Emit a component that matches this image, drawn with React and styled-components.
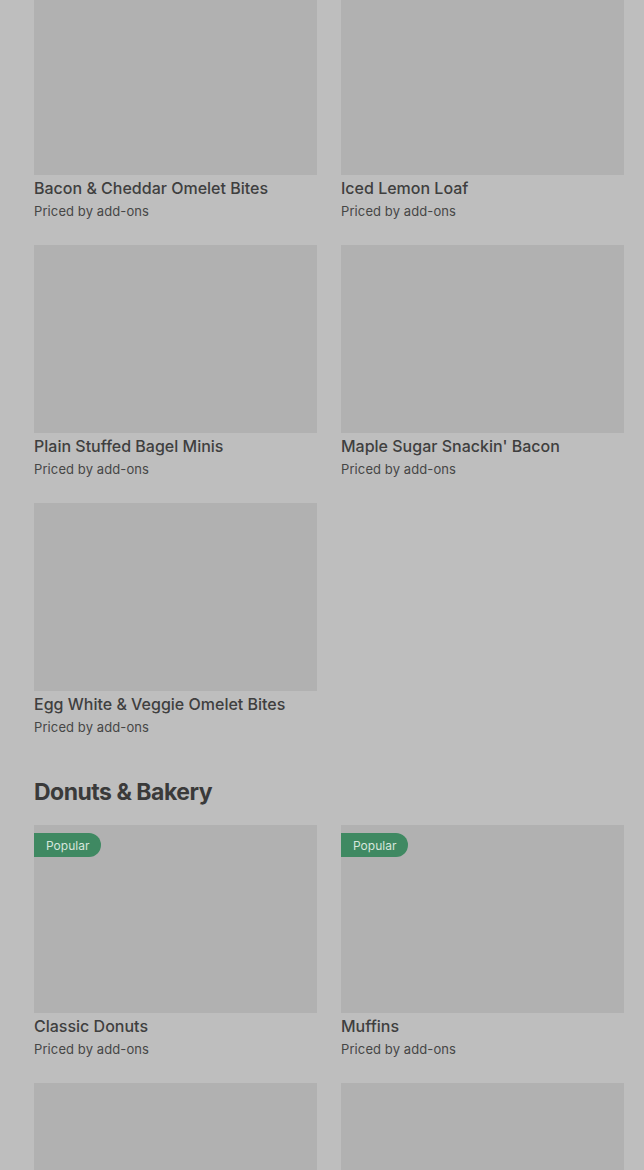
import React from 'react';
import styled, { createGlobalStyle } from 'styled-components';

const GlobalStyle = createGlobalStyle`
  html, body {
    margin: 0;
    padding: 0;
    background: #bebebe;
    font-family: Inter, "Noto Sans", Roboto, sans-serif;
    overflow: hidden;
  }
`;

const Page = styled.div`
  width: 644px;
  height: 1170px;
  overflow: hidden;
  background: #bebebe;
  box-sizing: border-box;
  padding: 0 20px 0 34px;
`;

const Scroller = styled.div`
  margin-top: -13px;
`;

const Grid = styled.div`
  display: grid;
  grid-template-columns: 283px 283px;
  column-gap: 24px;
  row-gap: 24px;
`;

const Card = styled.div`
  display: flex;
  flex-direction: column;
`;

const Thumb = styled.div`
  position: relative;
  height: 188px;
  background: #b1b1b1;
`;

const Badge = styled.span`
  position: absolute;
  top: 8px;
  left: 0;
  height: 24px;
  padding: 0 12px;
  display: flex;
  align-items: center;
  background: #3f8962;
  color: #d6e6dc;
  font-size: 12px;
  border-radius: 0 12px 12px 0;
`;

const Name = styled.div`
  margin-top: 2px;
  font-size: 16px;
  line-height: 22px;
  font-weight: 500;
  color: #3f3f3f;
`;

const Price = styled.div`
  margin-top: 2px;
  font-size: 13px;
  letter-spacing: 0.1px;
  line-height: 20px;
  color: #464646;
`;

const SectionTitle = styled.h2`
  margin: 39px 0 17px;
  font-size: 23px;
  line-height: 32px;
  font-weight: 700;
  letter-spacing: -0.5px;
  color: #3a3a3a;
`;

const breakfast = [
  'Bacon & Cheddar Omelet Bites',
  'Iced Lemon Loaf',
  'Plain Stuffed Bagel Minis',
  "Maple Sugar Snackin' Bacon",
  'Egg White & Veggie Omelet Bites',
];

const bakery = [
  { name: 'Classic Donuts', popular: true },
  { name: 'Muffins', popular: true },
  { name: '' },
  { name: '' },
];

const Item = ({ name, popular }) => (
  <Card>
    <Thumb>{popular && <Badge>Popular</Badge>}</Thumb>
    {name && <Name>{name}</Name>}
    {name && <Price>Priced by add-ons</Price>}
  </Card>
);

export default function App() {
  return (
    <Page>
      <GlobalStyle />
      <Scroller>
        <Grid>
          {breakfast.map(n => <Item key={n} name={n} />)}
        </Grid>
        <SectionTitle>Donuts &amp; Bakery</SectionTitle>
        <Grid>
          {bakery.map((b, i) => <Item key={i} {...b} />)}
        </Grid>
      </Scroller>
    </Page>
  );
}
